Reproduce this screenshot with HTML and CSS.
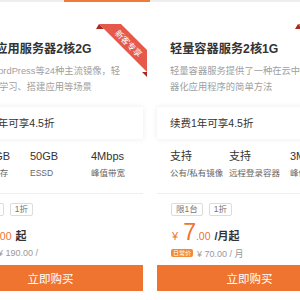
FILE: index.html
```html
<!DOCTYPE html>
<html lang="zh">
<head>
<meta charset="utf-8">
<link rel="stylesheet" href="styles.css">
</head>
<body>
<div class="tabline"><div class="tab-active"></div></div>
<div class="cards">
  <div class="card">
    <svg class="ribbon" width="56" height="56" viewBox="0 0 56 56">
      <polygon class="fold" points="3,9 6,4 11,9"/>
      <polygon class="fold" points="49,52 54,52 54,57"/>
      <polygon class="band" points="6,4 28,4 54,30 54,52"/>
      <text class="ribbon-text" x="36" y="23" transform="rotate(45 36 23)">新客专享</text>
    </svg>
    <div class="body">
      <h2 class="title">轻量应用服务器2核2G</h2>
      <p class="desc">提供WordPress等24种主流镜像，轻<br>松用于学习、搭建应用等场景</p>
    </div>
    <div class="promo">续费1年可享4.5折</div>
    <div class="specs">
      <div class="spec"><div class="val">2核2GB</div><div class="lbl">CPU/内存</div></div>
      <div class="spec"><div class="val">50GB</div><div class="lbl">ESSD</div></div>
      <div class="spec"><div class="val">4Mbps</div><div class="lbl">峰值带宽</div></div>
    </div>
    <div class="sep"></div>
    <div class="tags"><span class="tag">限1台</span><span class="tag">1折</span></div>
    <div class="price"><span class="yen">¥</span><span class="big">7</span><span class="dec">.00</span><span class="unit">起</span></div>
    <div class="orig"><span class="badge">日常价</span><span>¥ 190.00 /</span></div>
    <button class="buy">立即购买</button>
  </div>
  <div class="card">
    <svg class="ribbon" width="56" height="56" viewBox="0 0 56 56">
      <polygon class="fold" points="3,9 6,4 11,9"/>
      <polygon class="fold" points="49,52 54,52 54,57"/>
      <polygon class="band" points="6,4 28,4 54,30 54,52"/>
      <text class="ribbon-text" x="36" y="23" transform="rotate(45 36 23)">新客专享</text>
    </svg>
    <div class="body">
      <h2 class="title">轻量容器服务2核1G</h2>
      <p class="desc">轻量容器服务提供了一种在云中运行容<br>器化应用程序的简单方法</p>
    </div>
    <div class="promo">续费1年可享4.5折</div>
    <div class="specs">
      <div class="spec"><div class="val">支持</div><div class="lbl">公有/私有镜像</div></div>
      <div class="spec"><div class="val">支持</div><div class="lbl">远程登录容器</div></div>
      <div class="spec"><div class="val">3Mbps</div><div class="lbl">峰值带宽</div></div>
    </div>
    <div class="sep"></div>
    <div class="tags"><span class="tag">限1台</span><span class="tag">1折</span></div>
    <div class="price"><span class="yen">¥</span><span class="big">7</span><span class="dec">.00</span><span class="unit">/月起</span></div>
    <div class="orig"><span class="badge">日常价</span><span>¥ 70.00 / 月</span></div>
    <button class="buy">立即购买</button>
  </div>
</div>
</body>
</html>
```
FILE: styles.css
```css
html, body {
  margin: 0;
  padding: 0;
  background: #fff;
  overflow: hidden;
  width: 300px;
  height: 300px;
}
body {
  font-family: "Liberation Sans", "Noto Sans CJK SC", sans-serif;
  color: #333;
}
.tabline {
  height: 2px;
  background: #eeeeee;
}
.tab-active {
  margin-left: 64px;
  width: 86px;
  height: 2px;
  background: #ef7a3a;
}
.cards {
  display: flex;
  gap: 14px;
  margin-left: -42px;
  margin-top: 22px;
}
.card {
  position: relative;
  flex: none;
  width: 185px;
}
.ribbon {
  position: absolute;
  top: -4px;
  right: -6px;
  overflow: visible;
}
.band { fill: #e6594a; }
.fold { fill: #a82b22; }
.ribbon-text {
  fill: #fff;
  font-size: 8.5px;
  font-family: "Noto Sans CJK SC", sans-serif;
  text-anchor: middle;
  dominant-baseline: central;
}
.body {
  padding: 0 13px;
}
.title {
  margin: 17px 0 0;
  font-size: 12.2px;
  line-height: 16px;
  font-weight: bold;
  color: #333;
}
.desc {
  margin: 6px 0 0;
  font-size: 9.3px;
  line-height: 16px;
  color: #a0a0a0;
  white-space: nowrap;
}
.promo {
  margin-top: 12px;
  height: 32px;
  line-height: 32px;
  padding: 0 13px;
  font-size: 10.5px;
  color: #333;
  background: #fff;
  box-shadow: 0 0 6px rgba(0, 0, 0, 0.08);
}
.specs {
  display: grid;
  grid-template-columns: 59px 61px 1fr;
  padding: 10px 13px 14px;
}
.val {
  font-size: 11px;
  line-height: 14px;
  color: #333;
}
.lbl {
  margin-top: 4px;
  font-size: 8.5px;
  line-height: 12px;
  color: #666;
  white-space: nowrap;
}
.sep {
  height: 1px;
  background: #eeeeee;
}
.tags {
  display: flex;
  gap: 6px;
  padding: 9px 14px 0;
}
.tag {
  height: 11px;
  line-height: 11px;
  padding: 0 4px;
  border: 1px solid #dcdcdc;
  border-radius: 2px;
  font-size: 8.5px;
  color: #777;
}
.price {
  height: 29px;
  display: flex;
  align-items: baseline;
  padding: 4px 15px 0;
  box-sizing: border-box;
  color: #f07330;
}
.yen {
  font-size: 11px;
  margin-right: 5px;
}
.big {
  font-size: 23px;
  line-height: 24px;
}
.dec {
  font-size: 10.5px;
}
.unit {
  margin-left: 4px;
  font-size: 11px;
  font-weight: bold;
  color: #333;
}
.orig {
  display: flex;
  align-items: center;
  gap: 4px;
  height: 12px;
  padding: 2px 14px 0;
  font-size: 9px;
  color: #999;
}
.badge {
  height: 8px;
  line-height: 8px;
  padding: 0 2px;
  font-size: 6px;
  color: #fff;
  background: #f08a3c;
  border-radius: 2px;
}
.buy {
  display: block;
  width: 100%;
  height: 26px;
  margin-top: 6px;
  border: 0;
  padding: 0;
  background: #ef7430;
  color: #fff;
  font-family: "Liberation Sans", "Noto Sans CJK SC", sans-serif;
  font-size: 11.5px;
}
```
